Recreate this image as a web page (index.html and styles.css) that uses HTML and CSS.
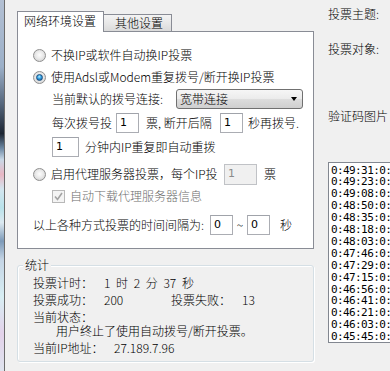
FILE: index.html
```html
<!DOCTYPE html>
<html lang="zh-CN">
<head>
<meta charset="utf-8">
<title>投票设置</title>
<link rel="stylesheet" href="styles.css">
</head>
<body>
<div class="screen">
  <div class="edge"></div>
  <div class="left">
    <div class="tabs">
      <div class="tab active">网络环境设置</div>
      <div class="tab">其他设置</div>
    </div>
    <div class="panel">
      <div class="row pad-radio r1">
        <span class="radio"></span><span class="rtext">不换IP或软件自动换IP投票</span>
      </div>
      <div class="row pad-radio">
        <span class="radio on"></span><span class="rtext">使用Adsl或Modem重复拨号/断开换IP投票</span>
      </div>
      <div class="row pad-indent">
        <span class="lab w-conn">当前默认的拨号连接:</span>
        <span class="combo"><span class="combo-text">宽带连接</span><span class="arrow"></span></span>
      </div>
      <div class="row pad-indent r4">
        <span class="lab w-each">每次拨号投</span>
        <span class="input w23">1</span>
        <span class="lab w-sep">票, 断开后隔</span>
        <span class="input w23">1</span>
        <span class="after">秒再拨号.</span>
      </div>
      <div class="row pad-indent r5">
        <span class="input w27">1</span>
        <span class="after a6">分钟内IP重复即自动重拨</span>
      </div>
      <div class="row pad-radio r6">
        <span class="radio"></span><span class="rtext w-proxy">启用代理服务器投票，每个IP投</span>
        <span class="input w33 disabled">1</span>
        <span class="after a7">票</span>
      </div>
      <div class="row pad-check">
        <span class="check"><svg width="11" height="11" viewBox="0 0 11 11"><path d="M2 5.5 L4.5 8.5 L9 2" fill="none" stroke="#a3a3a3" stroke-width="1.6"/></svg></span>
        <span class="gray">自动下载代理服务器信息</span>
      </div>
      <div class="row pad-plain r8">
        <span class="lab w-interval">以上各种方式投票的时间间隔为:</span>
        <span class="input w23">0</span>
        <span class="tilde">~</span>
        <span class="input w23">0</span>
        <span class="after a10">秒</span>
      </div>
    </div>
    <div class="group">
      <span class="legend">统计</span>
      <div class="srow s1"><span class="sl w-sl">投票计时：</span><span class="val">1 时 2 分 37 秒</span></div>
      <div class="srow s2"><span class="sl w-sl">投票成功：</span><span class="val w-ok">200</span><span class="sl w-fail">投票失败：</span><span class="val">13</span></div>
      <div class="srow s3"><span class="sl">当前状态：</span></div>
      <div class="srow s4"><span class="status">用户终止了使用自动拨号/断开投票。</span></div>
      <div class="srow s5"><span class="sl w-ip">当前IP地址：</span><span class="val">27.189.7.96</span></div>
    </div>
  </div>
  <div class="right">
    <div class="rlabel t1">投票主题:</div>
    <div class="rlabel t2">投票对象:</div>
    <div class="rlabel t3">验证码图片</div>
    <div class="log">
      <div>0:49:31:0:</div>
      <div>0:49:23:0:</div>
      <div>0:49:08:0:</div>
      <div>0:48:50:0:</div>
      <div>0:48:35:0:</div>
      <div>0:48:18:0:</div>
      <div>0:48:03:0:</div>
      <div>0:47:46:0:</div>
      <div>0:47:29:0:</div>
      <div>0:47:15:0:</div>
      <div>0:46:56:0:</div>
      <div>0:46:41:0:</div>
      <div>0:46:21:0:</div>
      <div>0:46:03:0:</div>
      <div>0:45:45:0:</div>
    </div>
  </div>
</div>
</body>
</html>
```

FILE: styles.css
```css
* { box-sizing: border-box; }
body {
  margin: 0;
  background: #f0f0f0;
  font-family: "Noto Sans CJK SC", sans-serif;
  font-weight: 300;
  font-size: 12px;
  color: #000;
}
.screen {
  display: flex;
  width: 390px;
  height: 371px;
  overflow: hidden;
}
.edge {
  flex: none;
  width: 5px;
  border-right: 1px solid #6b6b6b;
  background: linear-gradient(#b3c0d3 0%, #9cb0c8 18%, #56677c 28%, #1d2633 36%, #6e8aa5 40%, #c8d8e6 43%, #e8b7c4 47%, #d3e6ef 51%, #b9e2ea 56%, #dce9f0 60%, #7d9ab8 65%, #c5d5e5 70%, #d8eef3 80%, #e3d2ea 90%, #dfe4ee 100%);
}
.left {
  flex: none;
  width: 297px;
  margin-left: 12px;
}
.tabs {
  display: flex;
  align-items: flex-end;
  height: 19px;
  margin-top: 12px;
  position: relative;
  z-index: 1;
}
.tab {
  height: 17px;
  width: 68px;
  padding-left: 11px;
  line-height: 16px;
  border: 1px solid #898c95;
  border-left: none;
  border-bottom: none;
  background: linear-gradient(#f4f4f4, #e8e8e8 50%, #dadada);
  white-space: nowrap;
}
.tab.active {
  height: 21px;
  width: 87px;
  padding-left: 6px;
  line-height: 18px;
  margin-bottom: -1px;
  border-left: 1px solid #898c95;
  background: #fff;
}
.panel {
  height: 218px;
  border: 1px solid #898c95;
  background: #fff;
  padding-top: 12px;
}
.row {
  display: flex;
  align-items: center;
  height: 22px;
  line-height: 16px;
  white-space: nowrap;
}
.pad-radio { padding-left: 15px; }
.pad-indent { padding-left: 34px; }
.pad-check { padding-left: 34px; }
.pad-plain { padding-left: 15px; }
.r4 { margin-top: 2px; }
.r5 { margin-top: 2px; }
.r6 { margin-top: 5px; }
.r8 { margin-top: 7px; }
.radio {
  flex: none;
  width: 13px;
  height: 13px;
  border-radius: 50%;
  border: 1px solid #8f8f8f;
  background: radial-gradient(circle at 50% 45%, #fdfdfd 0, #eaeaea 45%, #c9c9c9 100%);
  margin-right: 5px;
  display: flex;
  align-items: center;
  justify-content: center;
}
.radio.on::after {
  content: "";
  width: 7px;
  height: 7px;
  border-radius: 50%;
  background: radial-gradient(circle at 45% 35%, #b9eeff 0, #3aa6e6 40%, #0d4d8c 100%);
  border: 1px solid #1b4f80;
  box-sizing: border-box;
}
.lab { flex: none; }
.w-conn { width: 124px; }
.w-each { width: 64px; }
.w-sep { width: 81px; padding-left: 7px; }
.w-proxy { width: 173px; }
.w-interval { width: 177px; }
.combo {
  flex: none;
  width: 127px;
  height: 20px;
  border: 1px solid #707070;
  border-radius: 3px;
  background: linear-gradient(#f6f6f6, #ebebeb 50%, #dddddd 51%, #cfcfcf);
  display: flex;
  align-items: center;
  padding-left: 3px;
  padding-right: 5px;
}
.combo-text { flex: 1; }
.arrow {
  width: 0;
  height: 0;
  border-left: 3.5px solid transparent;
  border-right: 3.5px solid transparent;
  border-top: 4px solid #000;
}
.input {
  flex: none;
  height: 20px;
  border: 1px solid #abadb3;
  border-top-color: #a0a3aa;
  background: #fff;
  padding-left: 3px;
  line-height: 18px;
  font-family: "DejaVu Sans", sans-serif;
  font-weight: normal;
  font-size: 11px;
}
.input.disabled {
  background: #f0f0f0;
  border-color: #c0c2c6;
  color: #8a8a8a;
  height: 21px;
}
.w23 { width: 23px; }
.w27 { width: 27px; }
.w33 { width: 33px; }
.after { margin-left: 5px; }
.a6 { margin-left: 6px; }
.a7 { margin-left: 7px; }
.a10 { margin-left: 10px; }
.tilde { flex: none; width: 14px; text-align: center; }
.check {
  flex: none;
  width: 13px;
  height: 13px;
  border: 1px solid #b8b8b8;
  background: #f4f4f4;
  margin-right: 5px;
  display: flex;
  align-items: center;
  justify-content: center;
}
.gray { color: #6d6d6d; }
.group {
  position: relative;
  margin-top: 16px;
  height: 97px;
  border: 1px solid #d5dfe5;
  border-radius: 3px;
  box-shadow: inset 1px 1px 0 #fff, 1px 1px 0 #fff;
  padding-top: 9px;
  padding-left: 15px;
}
.legend {
  position: absolute;
  left: 5px;
  top: -9px;
  padding: 0 2px;
  background: #f0f0f0;
  line-height: 16px;
}
.srow {
  display: flex;
  align-items: center;
  height: 16px;
  line-height: 14px;
  white-space: nowrap;
}
.s2 { margin-top: 1px; }
.s3 { margin-top: 1px; height: 15px; }
.s4 { height: 14px; padding-left: 23px; }
.s5 { margin-top: 2px; }
.sl { flex: none; }
.w-sl { width: 71px; }
.w-ok { width: 67px; }
.w-fail { width: 71px; }
.w-ip { width: 81px; }
.val { flex: none; white-space: pre; word-spacing: 3px; }
.right {
  flex: none;
  width: 80px;
  margin-left: 14px;
}
.rlabel {
  height: 16px;
  line-height: 16px;
  white-space: nowrap;
}
.t1 { margin-top: 6px; }
.t2 { margin-top: 19px; }
.t3 { margin-top: 51px; }
.log {
  margin-top: 38px;
  height: 181px;
  width: 80px;
  border: 1px solid #828790;
  border-right: none;
  background: #fff;
  padding-top: 1.5px;
  padding-left: 2px;
  font-family: "DejaVu Sans Mono", monospace;
  font-weight: normal;
  font-size: 11px;
  letter-spacing: -0.6px;
  line-height: 11.9px;
  white-space: nowrap;
}
```
